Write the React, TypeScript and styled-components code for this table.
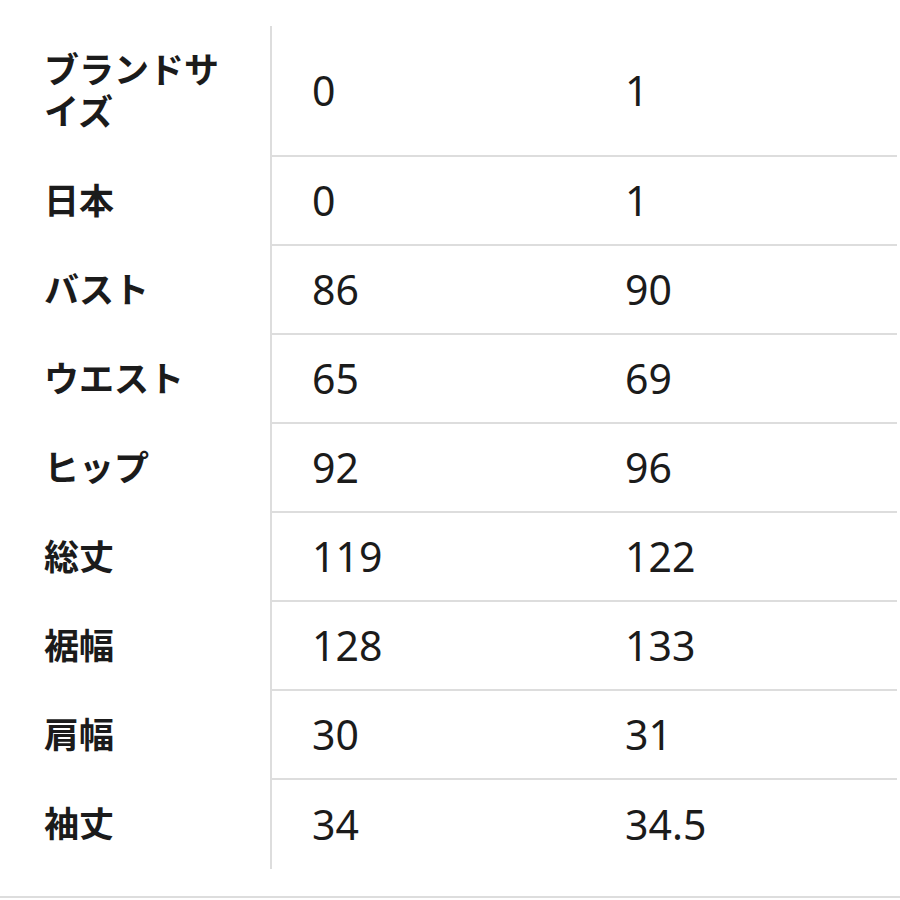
import React from 'react'
import styled, { createGlobalStyle } from 'styled-components'

const GlobalStyle = createGlobalStyle`
  html, body {
    margin: 0;
    padding: 0;
    background: #ffffff;
  }
  * {
    box-sizing: border-box;
  }
`

const Page = styled.div`
  width: 900px;
  padding-top: 26px;
  font-family: "Noto Sans", "Noto Sans CJK JP", sans-serif;
  color: #1b1b1b;
`

const Table = styled.div`
  display: flex;
  flex-direction: column;
  width: 897px;
`

const Row = styled.div<{ $tall?: boolean }>`
  display: grid;
  grid-template-columns: 272px 313px 312px;
  min-height: ${(p) => (p.$tall ? '131px' : '89px')};
`

const Label = styled.div`
  display: flex;
  align-items: center;
  padding: 0 26px 6px 44px;
  border-right: 2px solid #dddddd;
  font-family: "Noto Sans CJK JP", sans-serif;
  font-weight: 700;
  font-size: 35px;
  line-height: 42px;
`

const Value = styled.div<{ $last?: boolean }>`
  display: flex;
  align-items: center;
  padding-left: 40px;
  border-bottom: ${(p) => (p.$last ? 'none' : '2px solid #dddddd')};
  font-family: "Noto Sans", sans-serif;
  font-weight: 400;
  font-size: 41px;
  line-height: 1;
`

const Divider = styled.div`
  margin-top: 27px;
  height: 2px;
  background: #dddddd;
`

const rows: [string, string, string][] = [
  ['ブランドサイズ', '0', '1'],
  ['日本', '0', '1'],
  ['バスト', '86', '90'],
  ['ウエスト', '65', '69'],
  ['ヒップ', '92', '96'],
  ['総丈', '119', '122'],
  ['裾幅', '128', '133'],
  ['肩幅', '30', '31'],
  ['袖丈', '34', '34.5'],
]

const App: React.FC = () => {
  return (
    <>
      <GlobalStyle />
      <Page>
        <Table>
          {rows.map(([label, a, b], i) => {
            const last = i === rows.length - 1
            return (
              <Row key={label} $tall={i === 0}>
                <Label>{label}</Label>
                <Value $last={last}>{a}</Value>
                <Value $last={last}>{b}</Value>
              </Row>
            )
          })}
        </Table>
        <Divider />
      </Page>
    </>
  )
}

export default App
